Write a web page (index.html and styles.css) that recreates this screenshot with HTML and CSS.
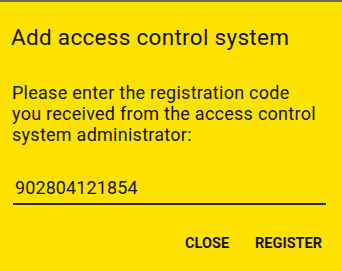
FILE: index.html
```html
<!DOCTYPE html>
<html>
<head>
<meta charset="utf-8">
<link rel="stylesheet" href="styles.css">
</head>
<body>
<div class="dialog">
  <h1 class="title">Add access control system</h1>
  <p class="message">Please enter the registration code<br>you received from the access control<br>system administrator:</p>
  <div class="field">
    <span class="value">902804121854</span>
  </div>
  <div class="actions">
    <button class="btn">CLOSE</button>
    <button class="btn">REGISTER</button>
  </div>
</div>
</body>
</html>
```
FILE: styles.css
```css
html, body {
  margin: 0;
  padding: 0;
  width: 342px;
  height: 271px;
  overflow: hidden;
  background: #ffe300;
}
body {
  border-top: 2px solid #6b6659;
  box-sizing: border-box;
  font-family: Roboto, "Liberation Sans", sans-serif;
  color: #17150a;
}
.dialog {
  display: flex;
  flex-direction: column;
  padding: 0 12px 0 11px;
  height: 269px;
  box-sizing: border-box;
}
.title {
  margin: 21px 0 0 0;
  font-size: 22.5px;
  font-weight: 400;
  line-height: 28px;
  letter-spacing: 0.3px;
}
.message {
  margin: 31px 0 0 1px;
  font-size: 18px;
  line-height: 21px;
  letter-spacing: 0.26px;
  white-space: nowrap;
}
.field {
  margin: 32px 4px 0 2px;
  border-bottom: 2px solid #2a2608;
  padding: 0 0 3px 2px;
  line-height: 22px;
}
.value {
  font-size: 18px;
  letter-spacing: 0.1px;
}
.actions {
  display: flex;
  justify-content: flex-end;
  gap: 26px;
  margin-top: 30px;
  padding-right: 8px;
}
.btn {
  background: none;
  border: none;
  padding: 0;
  font-family: Roboto, "Liberation Sans", sans-serif;
  font-weight: 700;
  font-size: 14.5px;
  line-height: 17px;
  color: #17150a;
}
```
